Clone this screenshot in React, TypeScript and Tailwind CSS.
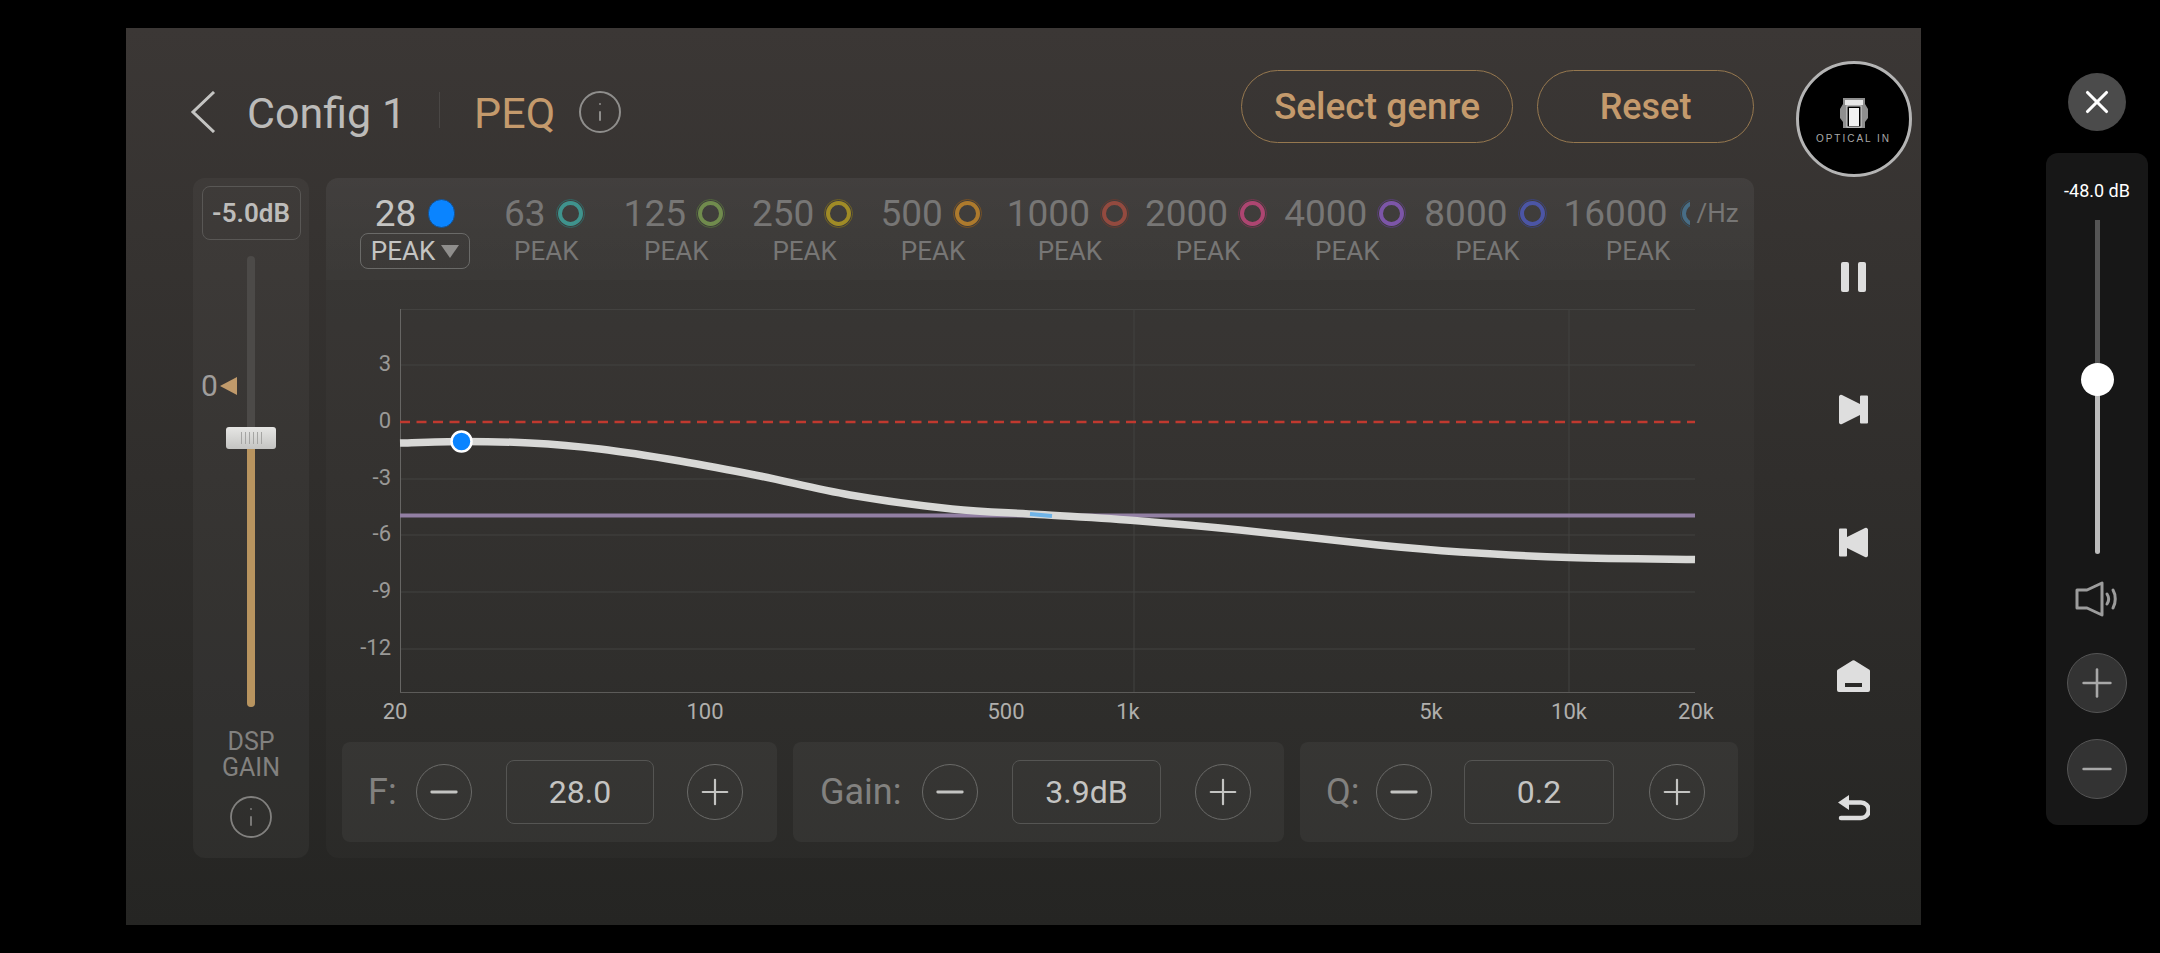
import { Info, Minus, Plus, X } from 'lucide-react';

type Band = {
  freq: string;
  margin: string;
  ringOuter: string;
  ringInner: string;
};

const BANDS: Band[] = [
  { freq: '63', margin: 'ml-[34px]', ringOuter: 'border-[#2f6f6c]', ringInner: 'border-[#3fa9a2]' },
  { freq: '125', margin: 'ml-[39px]', ringOuter: 'border-[#55703c]', ringInner: 'border-[#7d9f52]' },
  { freq: '250', margin: 'ml-[27px]', ringOuter: 'border-[#7a6a1e]', ringInner: 'border-[#b89f22]' },
  { freq: '500', margin: 'ml-[27px]', ringOuter: 'border-[#85561f]', ringInner: 'border-[#c98a2a]' },
  { freq: '1000', margin: 'ml-[25px]', ringOuter: 'border-[#6e3a30]', ringInner: 'border-[#a84e40]' },
  { freq: '2000', margin: 'ml-[16px]', ringOuter: 'border-[#7f3654]', ringInner: 'border-[#c9487f]' },
  { freq: '4000', margin: 'ml-[17px]', ringOuter: 'border-[#5d3f82]', ringInner: 'border-[#8c5cc4]' },
  { freq: '8000', margin: 'ml-[18px]', ringOuter: 'border-[#3c4488]', ringInner: 'border-[#4f5cc0]' },
];

const CURVE: [number, number][] = [
  [400, 443], [462, 441.5], [530, 443], [600, 449], [680, 461], [760, 476], [850, 495],
  [952, 509], [1039, 514.5], [1140, 521], [1240, 530], [1378, 545], [1460, 552], [1569, 557.5], [1695, 559.5],
];

// catmull-rom through the points
function curvePath(points: [number, number][]) {
  let d = `M${points[0][0]} ${points[0][1]}`;
  for (let i = 0; i < points.length - 1; i++) {
    const p0 = points[Math.max(i - 1, 0)];
    const p1 = points[i];
    const p2 = points[i + 1];
    const p3 = points[Math.min(i + 2, points.length - 1)];
    const c1x = p1[0] + (p2[0] - p0[0]) / 6;
    const c1y = p1[1] + (p2[1] - p0[1]) / 6;
    const c2x = p2[0] - (p3[0] - p1[0]) / 6;
    const c2y = p2[1] - (p3[1] - p1[1]) / 6;
    d += ` C${c1x} ${c1y} ${c2x} ${c2y} ${p2[0]} ${p2[1]}`;
  }
  return d;
}

function Ring({ outer, inner }: { outer: string; inner: string }) {
  return (
    <div className={`w-[29px] h-[29px] shrink-0 rounded-full border p-px opacity-80 ${outer}`}>
      <div className={`w-full h-full rounded-full border-[4px] ${inner}`} />
    </div>
  );
}

function BandColumn({ band }: { band: Band }) {
  return (
    <div className={`flex flex-col items-center ${band.margin}`}>
      <div className="flex items-center gap-[10px] h-[34px]">
        <span className="text-[37px] leading-none text-[#777675]">{band.freq}</span>
        <Ring outer={band.ringOuter} inner={band.ringInner} />
      </div>
      <div className="h-[36px] mt-[3px] pl-1 flex items-center text-[26px] text-[#777675]">PEAK</div>
    </div>
  );
}

function Stepper({
  label,
  value,
  className,
  labelClass,
  boxClass,
  plusClass,
}: {
  label: string;
  value: string;
  className: string;
  labelClass: string;
  boxClass: string;
  plusClass: string;
}) {
  return (
    <div className={`h-[100px] flex items-center rounded-lg bg-white/[0.045] ${className}`}>
      <span className={`text-[36px] text-[#82817f] ${labelClass}`}>{label}</span>
      <button className="w-[56px] h-[56px] rounded-full border border-[#6a6a68] flex items-center justify-center text-[#c4c4c2]">
        <Minus size={42} strokeWidth={1.6} />
      </button>
      <div className={`h-[64px] rounded-lg border border-[#555553] flex items-center justify-center text-[32px] text-[#c4c4c2] ${boxClass}`}>
        {value}
      </div>
      <button className={`w-[56px] h-[56px] rounded-full border border-[#6a6a68] flex items-center justify-center text-[#c4c4c2] ${plusClass}`}>
        <Plus size={42} strokeWidth={1.25} />
      </button>
    </div>
  );
}

function GainSlider() {
  return (
    <div className="w-[116px] rounded-xl bg-white/[0.035] flex flex-col items-center pt-2">
      <div className="w-[99px] h-[54px] rounded-lg border border-[#595755] flex items-center justify-center text-[26px] font-semibold text-[#bdbcba]">
        -5.0dB
      </div>
      <div className="relative mt-4 w-2 h-[451px] rounded-full bg-[#4c4a48]">
        <div className="absolute left-0 right-0 top-[180px] bottom-0 rounded-full bg-[#b8945f]" />
        <div className="absolute left-[-46px] top-[115px] flex items-center gap-[2px] text-[#a09e9c]">
          <span className="text-[30px] leading-none">0</span>
          <div className="w-0 h-0 border-y-[9px] border-y-transparent border-r-[17px] border-r-[#c09a6b]" />
        </div>
        <div className="absolute left-[-21px] top-[171px] w-[50px] h-[22px] rounded-[3px] bg-gradient-to-b from-[#e6e6e4] to-[#c4c4c2] flex items-center justify-center gap-[3px]">
          <div className="w-px h-[12px] bg-[#a5a5a3]" />
          <div className="w-px h-[12px] bg-[#a5a5a3]" />
          <div className="w-px h-[12px] bg-[#a5a5a3]" />
          <div className="w-px h-[12px] bg-[#a5a5a3]" />
          <div className="w-px h-[12px] bg-[#a5a5a3]" />
          <div className="w-px h-[12px] bg-[#a5a5a3]" />
        </div>
      </div>
      <div className="mt-[22px] text-center text-[25px] leading-[26px] text-[#82817f]">
        DSP
        <br />
        GAIN
      </div>
      <Info size={48} strokeWidth={0.9} className="mt-3 text-[#82817f]" />
    </div>
  );
}

function Chart() {
  const labelY: [string, number][] = [['3', 365], ['0', 422], ['-3', 479], ['-6', 535], ['-9', 592], ['-12', 649]];
  const labelX: [string, number][] = [['20', 395], ['100', 705], ['500', 1006], ['1k', 1128], ['5k', 1431], ['10k', 1569], ['20k', 1696]];
  return (
    <svg viewBox="326 280 1428 462" className="block w-[1428px] h-[462px]" fontFamily="Roboto, sans-serif">
      {[365, 479, 535, 592, 649].map((y) => (
        <line key={y} x1={400} x2={1695} y1={y} y2={y} stroke="#434240" strokeWidth={1} />
      ))}
      <line x1={400} x2={1695} y1={309.5} y2={309.5} stroke="#434240" />
      <line x1={1134} x2={1134} y1={309} y2={692} stroke="#434240" />
      <line x1={1569} x2={1569} y1={309} y2={692} stroke="#434240" />
      <line x1={400.5} x2={400.5} y1={309} y2={692} stroke="#666563" />
      <line x1={400} x2={1695} y1={692.5} y2={692.5} stroke="#5c5b59" />
      <line x1={400} x2={1695} y1={422} y2={422} stroke="#c0392f" strokeWidth={2.5} strokeDasharray="10 6.5" />
      <line x1={400} x2={1695} y1={515.5} y2={515.5} stroke="#927fa3" strokeWidth={4} />
      <path d={curvePath(CURVE)} fill="none" stroke="#d8d8d6" strokeWidth={7.5} />
      <path d="M1030 514 L1052 516" stroke="#6fb4e8" strokeWidth={4} />
      <circle cx={461.5} cy={441.5} r={10} fill="#0a84ff" stroke="#ffffff" strokeWidth={2.5} />
      {labelY.map(([t, y]) => (
        <text key={t} x={391} y={y + 6} textAnchor="end" fontSize={22} fill="#9a9997">
          {t}
        </text>
      ))}
      {labelX.map(([t, x]) => (
        <text key={t} x={x} y={719} textAnchor="middle" fontSize={22} fill="#b0afad">
          {t}
        </text>
      ))}
    </svg>
  );
}

function SideNav() {
  return (
    <div className="w-[167px] pl-8 pt-[33px] flex flex-col items-center text-[#dedede]">
      <div className="w-[116px] h-[116px] rounded-full bg-black border-[3px] border-[#b4b4b4] flex flex-col items-center pt-[33px]">
        <svg width="32" height="32" viewBox="0 0 32 32" fill="none">
          <path d="M5 1h22v6l3 5v9l-3 4v6H5v-6l-3-4v-9l3-5z" fill="#8f8f8f" />
          <path d="M7 3h18v5H7z" fill="#e8e8e8" />
          <rect x="9" y="9" width="14" height="21" fill="#000" stroke="#d8d8d8" strokeWidth="1" />
          <rect x="11" y="11" width="10" height="18" fill="#f2f2f2" />
        </svg>
        <span className="mt-[5px] text-[10px] leading-none tracking-[2px] text-[#a8a8a8] font-['Liberation_Sans',sans-serif] whitespace-nowrap">
          OPTICAL IN
        </span>
      </div>
      <div className="mt-[33px] h-[133px] flex items-center">
        <svg width="25" height="30" viewBox="0 0 25 30" fill="currentColor">
          <rect width="8" height="30" rx="2" />
          <rect x="17" width="8" height="30" rx="2" />
        </svg>
      </div>
      <div className="h-[133px] flex items-center">
        <svg width="29" height="31" viewBox="0 0 29 31" fill="currentColor">
          <path d="M3 1 L21 10V2.500a1 1 0 0 1 1-1h6a1 1 0 0 1 1 1v26a1 1 0 0 1-1 1h-6a1 1 0 0 1-1-1V21L3 30a2 2 0 0 1-3-1.500V2.500A2 2 0 0 1 3 1z" />
        </svg>
      </div>
      <div className="h-[133px] flex items-center">
        <svg width="29" height="31" viewBox="0 0 29 31" fill="currentColor" className="-scale-x-100">
          <path d="M3 1 L21 10V2.500a1 1 0 0 1 1-1h6a1 1 0 0 1 1 1v26a1 1 0 0 1-1 1h-6a1 1 0 0 1-1-1V21L3 30a2 2 0 0 1-3-1.500V2.500A2 2 0 0 1 3 1z" />
        </svg>
      </div>
      <div className="h-[133px] flex items-center">
        <svg width="33" height="32" viewBox="0 0 33 32" fill="currentColor">
          <path fillRule="evenodd" d="M15.500 0.500 a2 2 0 0 1 2 0 L32 9.500a2 2 0 0 1 1 1.500V30a2 2 0 0 1-2 2H2a2 2 0 0 1-2-2V11a2 2 0 0 1 1-1.500z M8 23v4h17v-4z" />
        </svg>
      </div>
      <div className="h-[133px] flex items-center">
        <svg width="32" height="27" viewBox="0 0 32 27" fill="none">
          <path d="M11 0 L0 7.500 L11 15z" fill="currentColor" />
          <path d="M8 7.500 H23 a6.750 6.750 0 0 1 0 15.500 H3" stroke="currentColor" strokeWidth="4.500" strokeLinecap="round" />
        </svg>
      </div>
    </div>
  );
}

function VolumePanel() {
  return (
    <div className="ml-[125px] w-[102px] flex flex-col items-center pt-[73px]">
      <button className="w-[58px] h-[58px] rounded-full bg-[#4b4b4b] flex items-center justify-center text-white">
        <X size={38} strokeWidth={2} />
      </button>
      <div className="mt-[22px] w-[102px] h-[672px] rounded-xl bg-[#171717] flex flex-col items-center pt-[27px]">
        <div className="text-[18px] leading-[22px] text-white whitespace-nowrap">-48.0 dB</div>
        <div className="relative mt-[18px] w-[5px] h-[334px] rounded-full bg-[#bcbcbc]">
          <div className="absolute left-0 right-0 top-0 h-[160px] bg-[#555555]" />
          <div className="absolute left-[-14px] top-[143px] w-[33px] h-[33px] rounded-full bg-white" />
        </div>
        <svg width="44" height="36" viewBox="0 0 44 36" fill="none" stroke="#9c9c9c" strokeWidth="3" strokeLinecap="round" strokeLinejoin="round" className="mt-[27px]">
          <path d="M2 9h10L27 2v32L12 27H2z" />
          <path d="M32 13c2 3 2 7 0 10" />
          <path d="M38 9c3 5 3 13 0 18" />
        </svg>
        <button className="mt-[36px] w-[60px] h-[60px] rounded-full bg-[#333333] border border-[#555555] flex items-center justify-center text-[#a8a8a8]">
          <Plus size={46} strokeWidth={1.35} />
        </button>
        <button className="mt-[26px] w-[60px] h-[60px] rounded-full bg-[#333333] border border-[#555555] flex items-center justify-center text-[#a8a8a8]">
          <Minus size={46} strokeWidth={1.35} />
        </button>
      </div>
    </div>
  );
}

export default function App() {
  return (
    <div className="w-[2160px] h-[953px] bg-black flex items-start overflow-hidden font-['Roboto',sans-serif]">
      <div className="ml-[126px] mt-[28px] w-[1795px] h-[897px] flex bg-gradient-to-b from-[#3b3735] via-[#302e2c] to-[#252523]">
        <div className="w-[1628px] pl-[67px]">
          <div className="h-[150px] flex items-start">
            <svg width="26" height="42" viewBox="0 0 26 42" fill="none" stroke="#c4c4c2" strokeWidth="3" className="mt-[63px] -ml-[3px]">
              <path d="M24 1 L3 21 L24 41" />
            </svg>
            <span className="mt-[60px] ml-[31px] text-[43px] leading-[50px] text-[#bcbbb9]">Config 1</span>
            <div className="mt-[64px] ml-[33px] w-px h-[36px] bg-[#4a4745]" />
            <span className="mt-[60px] ml-[34px] text-[43px] leading-[50px] text-[#c49a6c]">PEQ</span>
            <Info size={48} strokeWidth={1} className="mt-[60px] ml-[21px] text-[#8f8e8c]" />
            <button className="ml-auto mt-[42px] w-[272px] h-[73px] rounded-full border border-[#96784f] text-[37px] font-medium text-[#c49a6c]">
              Select genre
            </button>
            <button className="ml-6 mt-[42px] w-[217px] h-[73px] rounded-full border border-[#96784f] text-[36px] font-medium text-[#c49a6c]">
              Reset
            </button>
          </div>
          <div className="h-[680px] flex gap-[17px]">
            <GainSlider />
            <div className="w-[1428px] rounded-xl bg-white/[0.02] flex flex-col">
              <div className="h-[102px] rounded-t-xl bg-gradient-to-b from-white/[0.04] to-white/[0.015] pl-[34px] pt-[18px] flex items-start">
                <div className="flex flex-col items-center">
                  <div className="flex items-center gap-[12px] h-[34px]">
                    <span className="text-[37px] leading-none text-[#c4c4c2]">28</span>
                    <div className="w-[27px] h-[29px] rounded-full bg-[#0a84ff] border border-[#17508c]" />
                  </div>
                  <div className="mt-[3px] w-[110px] h-[36px] rounded-lg border border-[#6a6a68] flex items-center justify-center gap-[6px] text-[26px] text-[#c4c4c2]">
                    PEAK
                    <div className="w-0 h-0 border-x-[9px] border-x-transparent border-t-[13px] border-t-[#8f8e8c]" />
                  </div>
                </div>
                {BANDS.map((band) => (
                  <BandColumn key={band.freq} band={band} />
                ))}
                <div className="flex flex-col items-center ml-[17px]">
                  <div className="flex items-center gap-[12px] h-[34px]">
                    <span className="text-[37px] leading-none text-[#777675]">16000</span>
                    <div className="w-[29px] overflow-hidden">
                      <div className="w-[10px] overflow-hidden">
                        <Ring outer="border-[#33576f]" inner="border-[#4a7a99]" />
                      </div>
                    </div>
                  </div>
                  <div className="h-[36px] mt-[3px] pl-1 flex items-center text-[26px] text-[#777675]">PEAK</div>
                </div>
                <span className="-ml-[12px] h-[34px] flex items-center text-[26px] text-[#777675]">/Hz</span>
              </div>
              <Chart />
              <div className="px-4 flex gap-4">
                <Stepper label="F:" value="28.0" className="w-[435px] pl-[26px]" labelClass="w-[48px]" boxClass="w-[148px] ml-[34px]" plusClass="ml-[33px]" />
                <Stepper label="Gain:" value="3.9dB" className="w-[491px] pl-[27px]" labelClass="w-[102px]" boxClass="w-[149px] ml-[34px]" plusClass="ml-[34px]" />
                <Stepper label="Q:" value="0.2" className="w-[438px] pl-[26px]" labelClass="w-[50px]" boxClass="w-[150px] ml-[32px]" plusClass="ml-[35px]" />
              </div>
            </div>
          </div>
        </div>
        <SideNav />
      </div>
      <VolumePanel />
    </div>
  );
}
